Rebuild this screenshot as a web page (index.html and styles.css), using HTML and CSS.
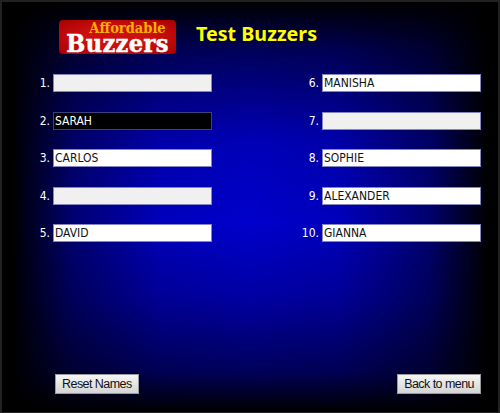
FILE: index.html
```html
<!DOCTYPE html>
<html lang="en">
<head>
    <meta charset="UTF-8">
    <meta name="viewport" content="width=device-width, initial-scale=1.0">
    <title>Test Buzzers</title>
    <link rel="stylesheet" href="styles.css">
</head>
<body>
    <div class="screen">
        <div class="header">
            <div class="logo">
                <span class="logo-top">Affordable</span>
                <span class="logo-main">Buzzers</span>
            </div>
            <h1>Test Buzzers</h1>
        </div>
        <div class="names">
            <div class="column">
                <div class="row"><span class="num">1.</span><input class="name empty" value=""></div>
                <div class="row"><span class="num">2.</span><input class="name active" value="SARAH"></div>
                <div class="row"><span class="num">3.</span><input class="name" value="CARLOS"></div>
                <div class="row"><span class="num">4.</span><input class="name empty" value=""></div>
                <div class="row"><span class="num">5.</span><input class="name" value="DAVID"></div>
            </div>
            <div class="column">
                <div class="row"><span class="num">6.</span><input class="name" value="MANISHA"></div>
                <div class="row"><span class="num">7.</span><input class="name empty" value=""></div>
                <div class="row"><span class="num">8.</span><input class="name" value="SOPHIE"></div>
                <div class="row"><span class="num">9.</span><input class="name" value="ALEXANDER"></div>
                <div class="row"><span class="num">10.</span><input class="name" value="GIANNA"></div>
            </div>
        </div>
        <div class="footer">
            <button>Reset Names</button>
            <button>Back to menu</button>
        </div>
    </div>
</body>
</html>
```

FILE: styles.css
```css
html, body {
    margin: 0;
    padding: 0;
    background-color: #000;
}
.screen {
    box-sizing: border-box;
    width: 500px;
    height: 413px;
    border: 2px solid #222;
    border-bottom-width: 1px;
    background-color: #0000cc;
    background-image:
        linear-gradient(90deg, #000 2%, rgba(0,0,0,0.45) 14%, rgba(0,0,0,0.08) 32%, rgba(0,0,0,0) 50%, rgba(0,0,0,0.08) 68%, rgba(0,0,0,0.45) 86%, #000 98%),
        linear-gradient(180deg, #000 0%, rgba(0,0,0,0.55) 12%, rgba(0,0,0,0.1) 34%, rgba(0,0,0,0) 54%, rgba(0,0,0,0.2) 72%, rgba(0,0,0,0.55) 90%, #000 100%);
    display: flex;
    flex-direction: column;
    font-family: "DejaVu Sans", "Open Sans", sans-serif;
    font-stretch: condensed;
    overflow: hidden;
}
.header {
    display: flex;
    align-items: flex-start;
    height: 34px;
    margin-top: 18px;
    padding-left: 57px;
}
.logo {
    width: 117px;
    height: 34px;
    border-radius: 4px;
    background: radial-gradient(ellipse at center, #cc1010 40%, #a80000 100%);
    display: flex;
    flex-direction: column;
    align-items: center;
    font-family: "DejaVu Serif", "Liberation Serif", serif;
    font-weight: 900;
}
.logo-top {
    color: #f9b000;
    font-size: 14.5px;
    height: 12px;
    line-height: 12px;
    margin-top: 2px;
    margin-left: 20px;
}
.logo-main {
    color: #fff;
    font-size: 25px;
    height: 20px;
    line-height: 20px;
    letter-spacing: 0.4px;
    -webkit-text-stroke: 0.5px #fff;
}
h1 {
    margin: 0 0 0 20px;
    color: #ffff00;
    font-size: 19.7px;
    font-weight: bold;
    font-family: "Noto Sans", "Open Sans", sans-serif;
    line-height: 27px;
}
.names {
    display: flex;
    margin-top: 20px;
    padding-left: 36px;
    gap: 95px;
}
.column {
    display: flex;
    flex-direction: column;
    gap: 19.5px;
}
.row {
    display: flex;
    align-items: center;
    width: 174px;
    justify-content: flex-end;
    gap: 3px;
    color: #fff;
    font-size: 12px;
}
.name {
    box-sizing: border-box;
    flex: 0 0 159px;
    width: 159px;
    height: 18px;
    margin: 0;
    padding: 0 1px;
    border: 1px solid #8585c0;
    border-radius: 0;
    outline: none;
    background-color: #fff;
    color: #111;
    font-family: inherit;
    font-stretch: condensed;
    font-size: 12px;
}
.name.empty {
    background-color: #f0f0f0;
}
.name.active {
    background-color: #000;
    color: #fff;
    border-color: #404078;
}
.footer {
    display: flex;
    justify-content: space-between;
    margin-top: auto;
    margin-bottom: 18px;
    padding: 0 17px 0 53px;
}
button {
    box-sizing: border-box;
    height: 20px;
    padding: 0 6px;
    border: 1px solid #9a9a9a;
    background: linear-gradient(#f6f6f6, #d4d4d4);
    color: #111;
    font-family: "Liberation Sans", Arial, sans-serif;
    font-size: 12.5px;
    letter-spacing: -0.55px;
}
```
